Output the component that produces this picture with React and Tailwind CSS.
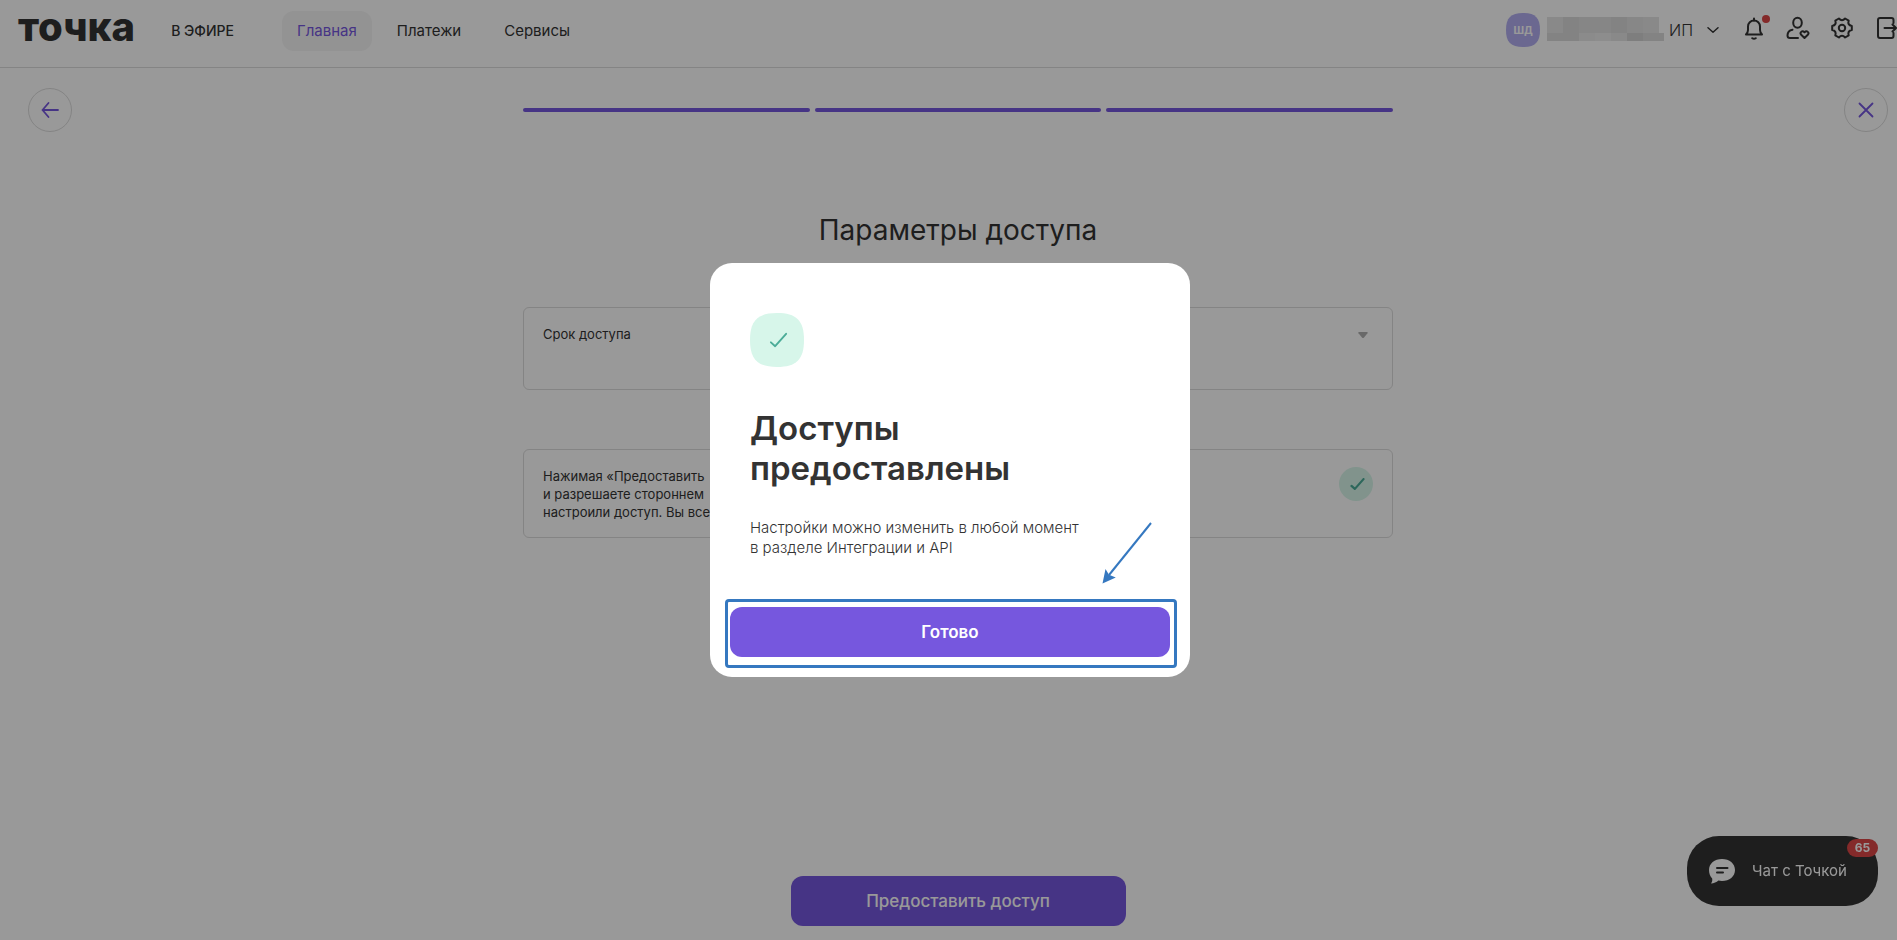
const squircle = "M50 0C86 0 100 14 100 50S86 100 50 100 0 86 0 50 14 0 50 0Z";

function Squircle({ className, children }) {
  return (
    <span className="relative grid w-fit shrink-0 place-items-center">
      <svg viewBox="0 0 100 100" className={className} aria-hidden="true">
        <path d={squircle} fill="currentColor" />
      </svg>
      <span className="absolute inset-0 grid place-items-center">{children}</span>
    </span>
  );
}

function Check({ className }) {
  return (
    <svg viewBox="0 0 20 16" className={className} fill="none" stroke="currentColor" strokeLinecap="round" strokeLinejoin="round" aria-hidden="true">
      <path d="M2 10.5l4.5 4L18 1.5" />
    </svg>
  );
}

const mosaicTop = ["#e4e4e4", "#dbdbdb", "#dfdfdf", "#dfdfdf", "#dbdbdb", "#e2e2e2", "#e4e4e4"];
const mosaicBottom = ["#dbdbdb", "#dbdbdb", "#e8e8e8", "#ececec", "#e4e4e4", "#d2d2d2", "#dadada"];

function HiddenName() {
  return (
    <svg viewBox="0 0 117 24" className="mt-[-2px] ml-[7px] h-6 w-[117px]" shapeRendering="crispEdges" aria-hidden="true">
      {mosaicTop.map((c, i) => (
        <rect key={`t${i}`} x={i * 16} y="0" width="16" height="16" fill={c} />
      ))}
      {mosaicBottom.map((c, i) => (
        <rect key={`b${i}`} x={i * 16} y="16" width={i === 6 ? 21 : 16} height="8" fill={c} />
      ))}
    </svg>
  );
}

function Header() {
  return (
    <header className="flex h-[68px] items-start border-b border-[#dcdcdc] pl-[18px]">
      <a href="#home" className="pt-[5px] text-[40px] leading-[44px] font-extrabold">точка</a>
      <nav className="ml-9 flex items-center pt-[10px] text-[15px] leading-10">
        <a href="#live" className="pt-px text-sm leading-10 font-medium">В ЭФИРЕ</a>
        <a href="#main" className="ml-12 rounded-xl bg-[#f5f5f5] px-[15px] text-[#7657de]">Главная</a>
        <a href="#payments" className="ml-[25px]">Платежи</a>
        <a href="#services" className="ml-[43px]">Сервисы</a>
      </nav>
      <div className="ml-auto flex h-[60px] items-center">
        <button type="button" className="flex items-center">
          <Squircle className="size-[34px] text-[#b2aef0]">
            <span className="text-[13px] font-semibold text-white">шд</span>
          </Squircle>
          <HiddenName />
          <span className="ml-[5px] text-base font-light">ИП</span>
          <svg viewBox="0 0 12 6" className="ml-[14px] h-[6px] w-3" fill="none" stroke="currentColor" strokeWidth="1.500" strokeLinecap="round" strokeLinejoin="round" aria-hidden="true">
            <path d="M1 .8l5 4.400 5-4.400" />
          </svg>
        </button>
        <button type="button" aria-label="Уведомления" className="relative ml-[23px] mt-[-4px]">
          <svg viewBox="0 0 24 24" className="size-6" fill="none" stroke="currentColor" strokeWidth="2" strokeLinejoin="round" strokeLinecap="round" aria-hidden="true">
            <path d="M4 18.500h16c-1.200-1.300-2-2.500-2-4.500v-3.500a6 6 0 0 0-12 0V14c0 2-.8 3.200-2 4.500z" />
            <path d="M12 4.500V2.500M10.300 22.200q1.700 1.200 3.400 0" />
          </svg>
          <span className="absolute top-[-1px] right-[-4px] size-2 rounded-full bg-[#dc4646]" />
        </button>
        <button type="button" aria-label="Профиль" className="ml-5 mt-[-4px]">
          <svg viewBox="0 0 24 24" className="size-6" fill="none" stroke="currentColor" strokeWidth="2" strokeLinejoin="round" strokeLinecap="round" aria-hidden="true">
            <ellipse cx="11.500" cy="6.700" rx="4.300" ry="5" />
            <path d="M6.500 13.800C3 14.500 1.500 17 1.500 19.500c0 1.700.8 2.500 2.500 2.500h8" />
            <path d="M18.500 22l-3.300-3.200c-1.800-2 .8-5 3.300-2.500 2.500-2.500 5.100.5 3.300 2.500z" />
          </svg>
        </button>
        <button type="button" aria-label="Настройки" className="ml-5 mt-[-4px]">
          <svg viewBox="0 0 24 24" className="size-6" fill="none" stroke="currentColor" strokeWidth="2" strokeLinejoin="round" aria-hidden="true">
            <path d="M21.800 9.900v4.200Q17.200 15 18.700 19.400L15.100 21.500Q12 18 8.900 21.500L5.300 19.400Q6.800 15 2.200 14.100V9.900Q6.800 9 5.300 4.600L8.900 2.500Q12 6 15.100 2.500L18.700 4.600Q17.200 9 21.800 9.900z" />
            <circle cx="12" cy="12" r="3.200" />
          </svg>
        </button>
        <button type="button" aria-label="Выйти" className="ml-[22px] mr-4 mt-[-4px]">
          <svg viewBox="0 0 24 24" className="size-6" fill="none" stroke="currentColor" strokeWidth="2" strokeLinejoin="round" strokeLinecap="round" aria-hidden="true">
            <path d="M17.500 7V4q0-2-2-2H4Q2 2 2 4v16q0 2 2 2h11.500q2 0 2-2v-3M8.500 12h11M16.500 8.500L20 12l-3.500 3.500" />
          </svg>
        </button>
      </div>
    </header>
  );
}

function RoundButton({ label, children }) {
  return (
    <button type="button" aria-label={label} className="grid size-11 place-items-center rounded-full border border-[#dcdcdc] text-[#7657de]">
      <svg viewBox="0 0 18 18" className="size-[18px]" fill="none" stroke="currentColor" strokeWidth="1.800" strokeLinecap="round" strokeLinejoin="round" aria-hidden="true">
        {children}
      </svg>
    </button>
  );
}

function AccessPage() {
  return (
    <main>
      <div className="flex items-center justify-between px-7 pt-5">
        <RoundButton label="Назад">
          <path d="M17 9H1.500M7.500 2L1.500 9l6 7" />
        </RoundButton>
        <div className="grid w-[870px] grid-cols-3 gap-[5px]">
          <span className="h-1 rounded-full bg-[#7657de]" />
          <span className="h-1 rounded-full bg-[#7657de]" />
          <span className="h-1 rounded-full bg-[#7657de]" />
        </div>
        <RoundButton label="Закрыть">
          <path d="M2.500 2.500l13 13M15.500 2.500l-13 13" />
        </RoundButton>
      </div>
      <div className="mx-auto w-[870px]">
        <h1 className="pt-[78px] text-center text-[28px] leading-10">Параметры доступа</h1>
        <label className="mt-[57px] flex h-[83px] items-start justify-between rounded-md border border-[#dcdcdc] px-[19px] pt-[17px] text-[13px] leading-[18px]">
          <span>Срок доступа</span>
          <select className="ml-4 h-[18px] grow appearance-none bg-transparent outline-none" />
          <svg viewBox="0 0 10 6" className="mt-[7px] mr-[5px] h-[6px] w-[10px] text-[#b0b0b0]" aria-hidden="true">
            <path d="M1 0h8q1.200.3.500 1.200L6 5.400q-1 1-2 0L.5 1.200Q-.2.300 1 0z" fill="currentColor" />
          </svg>
        </label>
        <section className="mt-[59px] flex items-start justify-between rounded-md border border-[#dcdcdc] px-[19px] pt-[17px] pb-4 text-[13px] leading-[18px]">
          <p>
            Нажимая «Предоставить
            <br />и разрешаете стороннем
            <br />настроили доступ. Вы все
          </p>
          <span className="grid size-[34px] place-items-center rounded-full bg-[#d7f6ea] text-[#4bac98]">
            <Check className="ml-[2px] h-3 w-[15px] stroke-3" />
          </span>
        </section>
      </div>
    </main>
  );
}

function ChatButton() {
  return (
    <button type="button" className="fixed right-[19px] bottom-[34px] flex h-[70px] w-[191px] items-center rounded-[32px] bg-[#333] pl-[22px] text-white">
      <svg viewBox="0 0 26 25" className="h-[25px] w-[26px]" aria-hidden="true">
        <path d="M13 0c7.500 0 13 4.600 13 11s-5.500 11-13 11c-1.500 0-2.600-.1-3.600-.4C7.500 23.400 5 24.400 2 24.500c1.200-1.500 1.400-3 1.200-5C1.100 17.500 0 14.500 0 11 0 4.600 5.500 0 13 0z" fill="currentColor" />
        <path d="M8 9h10.500M8 13.500h6" stroke="#333" strokeWidth="2" strokeLinecap="round" />
      </svg>
      <span className="ml-[17px] text-[15px]">Чат с Точкой</span>
      <span className="absolute top-[3px] right-0 grid h-[18px] w-[31px] place-items-center rounded-full bg-[#dc4646] text-xs font-bold">65</span>
    </button>
  );
}

function SuccessDialog() {
  return (
    <div className="fixed inset-0 grid place-items-center bg-black/40 pl-[3px]">
      <section role="dialog" aria-modal="true" aria-labelledby="done-title" className="relative w-[480px] rounded-[22px] bg-white px-[15px] pt-[50px] pb-[9px]">
        <div className="pl-[25px]">
          <Squircle className="size-[54px] text-[#d7f6ea]">
            <Check className="ml-[2px] h-4 w-[19px] stroke-2 text-[#4bac98]" />
          </Squircle>
          <h2 id="done-title" className="mt-[41px] text-[33px] leading-10 font-semibold">
            Доступы
            <br />
            предоставлены
          </h2>
          <p className="mt-[30px] text-[15px] leading-5 font-light">
            Настройки можно изменить в любой момент
            <br />в разделе Интеграции и API
          </p>
        </div>
        <div className="mt-[41px] mr-[-2px] rounded border-3 border-[#3578c0] p-[2px] pt-[5px] pr-1 pb-2">
          <button type="button" className="block h-[50px] w-full rounded-xl bg-[#7657de] pt-px text-[17px] font-semibold text-white">Готово</button>
        </div>
        <svg viewBox="0 0 52 64" className="absolute top-[258px] right-[37px] h-16 w-[52px] text-[#3578c0]" aria-hidden="true">
          <path d="M50 2L8 54" stroke="currentColor" strokeWidth="2" />
          <path d="M1.500 62.500L4.500 48l3.500 5.800 6.800 2.700z" fill="currentColor" />
        </svg>
      </section>
    </div>
  );
}

export default function App() {
  return (
    <div className="relative min-h-screen overflow-hidden bg-white font-[Inter,'Noto_Sans',sans-serif] text-[#333]">
      <div className="-mr-[19px]">
        <Header />
        <AccessPage />
      </div>
      <div className="fixed bottom-[14px] left-0 -right-[19px] flex justify-center">
        <button type="button" className="h-[50px] w-[335px] rounded-xl bg-[#7657de] pt-px text-[17px] font-medium text-white">Предоставить доступ</button>
      </div>
      <ChatButton />
      <SuccessDialog />
    </div>
  );
}
